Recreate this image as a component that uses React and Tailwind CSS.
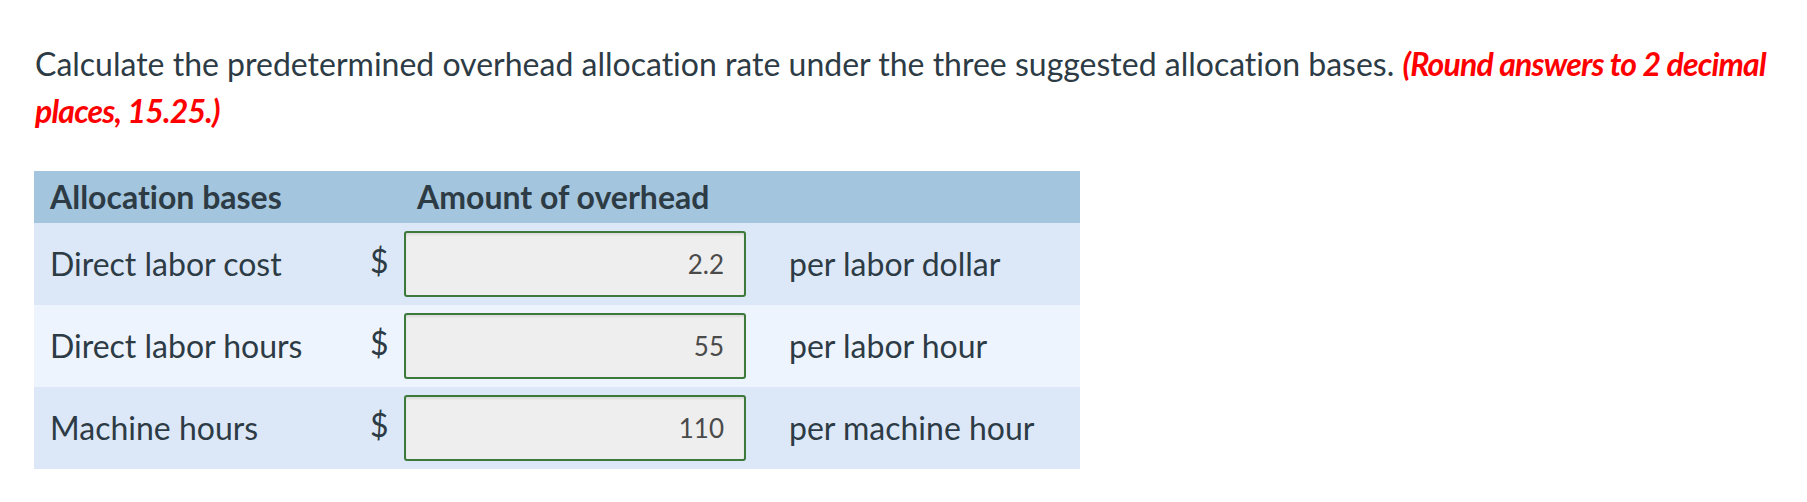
const rows = [
  { label: 'Direct labor cost', value: '2.2', unit: 'per labor dollar', bg: 'bg-[#dce8f8]' },
  { label: 'Direct labor hours', value: '55', unit: 'per labor hour', bg: 'bg-[#edf4fe]' },
  { label: 'Machine hours', value: '110', unit: 'per machine hour', bg: 'bg-[#dce8f8]' },
];

const RateRow = ({ label, value, unit, bg }) => (
  <div className={`flex h-[82px] items-center ${bg}`}>
    <div className="w-[322px] pl-4">{label}</div>
    <div className="w-[48px] pl-[14px] -mt-[6px]">$</div>
    <div className="flex h-[66px] w-[342px] items-center justify-end rounded-[3px] border-2 border-[#3b7a3b] bg-[#eeeeee] pr-[20px] shadow-[inset_0_2px_2px_rgba(0,0,0,0.08)]">
      <span className="text-[26px] text-[#4a4a4a]">{value}</span>
    </div>
    <div className="pl-[43px]">{unit}</div>
  </div>
);

const App = () => {
  return (
    <div className="min-h-[502px] bg-white pl-[35px] pr-[8px] pt-[40px] font-['Lato',sans-serif] text-[32px] text-[#2d3b45] [font-variant-ligatures:no-common-ligatures]">
      <p className="leading-[47px]">
        Calculate the predetermined overhead allocation rate under the three
        suggested allocation bases.{' '}
        <span className="font-bold italic tracking-[-0.8px] text-[#ff0000]">
          (Round answers to 2 decimal places, 15.25.)
        </span>
      </p>

      <div className="mt-[37px] w-[1046px] -ml-px">
        <div className="flex h-[52px] items-center bg-[#a4c5de] font-bold">
          <div className="w-[322px] pl-4">Allocation bases</div>
          <div className="pl-[61px]">Amount of overhead</div>
        </div>
        {rows.map((row) => (
          <RateRow key={row.label} {...row} />
        ))}
      </div>
    </div>
  );
};

export default App;
